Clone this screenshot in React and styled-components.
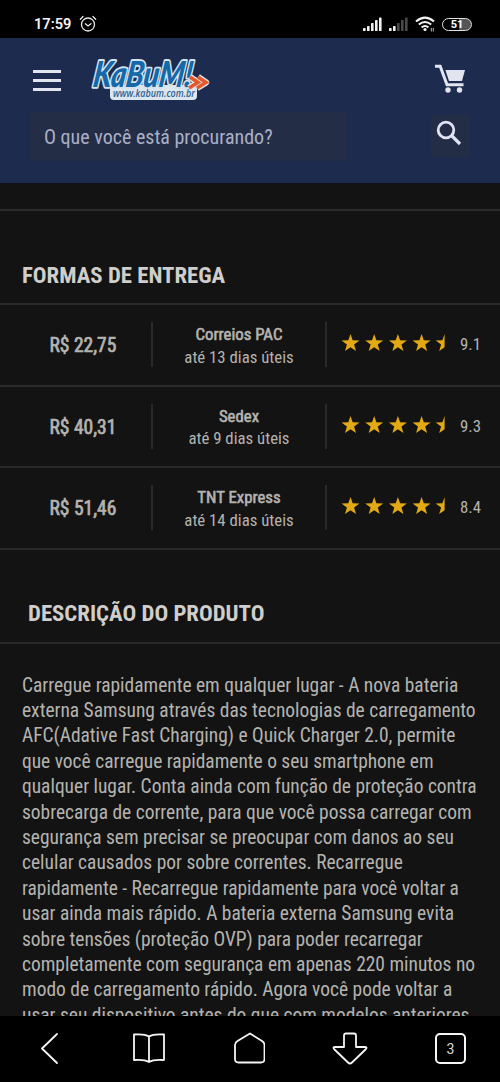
import React from "react";
import styled, { createGlobalStyle } from "styled-components";

const fretes = [
  { preco: "R$ 22,75", nome: "Correios PAC", prazo: "até 13 dias úteis", nota: "9.1" },
  { preco: "R$ 40,31", nome: "Sedex", prazo: "até 9 dias úteis", nota: "9.3" },
  { preco: "R$ 51,46", nome: "TNT Express", prazo: "até 14 dias úteis", nota: "8.4" },
];

const descricao = [
  "Carregue rapidamente em qualquer lugar - A nova bateria",
  "externa Samsung através das tecnologias de carregamento",
  "AFC(Adative Fast Charging) e Quick Charger 2.0, permite",
  "que você carregue rapidamente o seu smartphone em",
  "qualquer lugar. Conta ainda com função de proteção contra",
  "sobrecarga de corrente, para que você possa carregar com",
  "segurança sem precisar se preocupar com danos ao seu",
  "celular causados por sobre correntes. Recarregue",
  "rapidamente - Recarregue rapidamente para você voltar a",
  "usar ainda mais rápido. A bateria externa Samsung evita",
  "sobre tensões (proteção OVP) para poder recarregar",
  "completamente com segurança em apenas 220 minutos no",
  "modo de carregamento rápido. Agora você pode voltar a",
  "usar seu dispositivo antes do que com modelos anteriores",
];

const STAR = "M9.5 0 L11.7 6.2 L18.5 6.4 L13.1 10.5 L15 17 L9.5 13.2 L4 17 L5.9 10.5 L0.5 6.4 L7.3 6.2 Z";

function Signal({ level }) {
  return (
    <svg width="19" height="14" viewBox="0 0 19 14">
      {[3, 5, 8, 11, 13.5].map((h, i) => (
        <rect key={h} x={i * 4} y={14 - h} width="2.6" height={h} rx="0.6" fill={i < level ? "#f2f2f2" : "#4a4a4a"} />
      ))}
    </svg>
  );
}

function Stars() {
  return (
    <svg width="105" height="18" viewBox="0 0 105 18" fill="#e3a914">
      {[0, 1, 2, 3].map((i) => (
        <path key={i} d={STAR} transform={`translate(${i * 23.7} 0)`} />
      ))}
      <path d="M103.6 0 V13.2 L98.2 17 L100.1 10.5 L94.7 6.4 L101.4 6.2 Z" />
    </svg>
  );
}

function Logo() {
  return (
    <LogoSvg width="122" height="50" viewBox="0 0 122 50">
      <rect x="19" y="30" width="87" height="15" rx="4" fill="#dbe6ef" />
      <g transform="translate(1 32) skewX(-8)">
        <text
          fontFamily="Lato, sans-serif"
          fontWeight="900"
          fontStyle="italic"
          fontSize="36"
          textLength="99"
          lengthAdjust="spacingAndGlyphs"
          fill="#1569a8"
          stroke="#d3e4f0"
          strokeWidth="3.6"
          strokeLinejoin="round"
          paintOrder="stroke"
        >
          KaBuM!
        </text>
      </g>
      <g fill="none" stroke="#dfe3ea" strokeWidth="6.4" strokeLinejoin="round">
        <path d="M99 22l8 5.5l-9 5.5M107 22l8 5.5l-9 5.5" />
        <path d="M99 22l8 5.5l-9 5.5M107 22l8 5.5l-9 5.5" stroke="#e4592b" strokeWidth="3.6" strokeLinejoin="miter" />
      </g>
      <text
        x="22"
        y="42"
        fontFamily="Open Sans, sans-serif"
        fontStyle="italic"
        fontWeight="600"
        fontStretch="100%"
        fontSize="10"
        textLength="82"
        lengthAdjust="spacingAndGlyphs"
        fill="#315f91"
      >
        www.kabum.com.br
      </text>
    </LogoSvg>
  );
}

function App() {
  return (
    <Screen>
      <GlobalStyle />
      <StatusBar>
        <Clock>17:59</Clock>
        <svg width="18" height="18" viewBox="0 0 18 18" fill="none" stroke="#e8e8e8" strokeWidth="1.3" strokeLinecap="round">
          <circle cx="9" cy="9.5" r="6.5" />
          <path d="M1.3 4.2L4 1.5M14 1.5l2.7 2.7M6.4 8.8L9 11l3-2.3" />
        </svg>
        <StatusRight>
          <Signal level={5} />
          <Signal level={2} />
          <svg width="20" height="16" viewBox="0 0 20 16" fill="none" stroke="#f2f2f2" strokeWidth="2">
            <path d="M1 5.5Q10 -2.2 19 5.5M3.8 8.6Q10 3.3 16.2 8.6M6.6 11.4Q10 8.6 13.4 11.4" />
            <circle cx="10" cy="13.5" r="1.6" fill="#f2f2f2" stroke="none" />
            <path d="M16.3 12v3.5M18.3 12v3.5" strokeWidth="1" stroke="#bbb" />
          </svg>
          <Battery>51</Battery>
        </StatusRight>
      </StatusBar>

      <Header>
        <HeaderTop>
          <Menu>
            <span />
            <span />
            <span />
          </Menu>
          <Logo />
          <Cart width="32" height="30" viewBox="0 0 32 30">
            <path d="M1 2.3H6.2L13 20.8H29.5" fill="none" stroke="#e2e4f0" strokeWidth="3" />
            <path d="M11.4 6H31L28 17H15Z" fill="#e2e4f0" />
            <circle cx="14" cy="26" r="2.7" fill="#e2e4f0" />
            <circle cx="25.5" cy="26" r="2.7" fill="#e2e4f0" />
          </Cart>
        </HeaderTop>
        <Search>
          <Input>O que você está procurando?</Input>
          <SearchButton>
            <svg width="26" height="26" viewBox="0 0 26 26" fill="none" stroke="#dfe3f2" strokeWidth="2.8">
              <circle cx="10" cy="10" r="7.8" />
              <path d="M15.5 15.5L24 24" strokeWidth="3.2" />
            </svg>
          </SearchButton>
        </Search>
      </Header>

      <Page>
        <Spacer />
        <Title $left={22} $top={49}>FORMAS DE ENTREGA</Title>
        {fretes.map((frete) => (
          <Row key={frete.nome}>
            <Price>{frete.preco}</Price>
            <Service>
              <strong>{frete.nome}</strong>
              <p>{frete.prazo}</p>
            </Service>
            <Rating>
              <Stars />
              <span>{frete.nota}</span>
            </Rating>
          </Row>
        ))}
        <Title $left={28} $top={48}>DESCRIÇÃO DO PRODUTO</Title>
        <Description>
          {descricao.map((linha) => (
            <p key={linha}>{linha}</p>
          ))}
        </Description>
      </Page>

      <NavBar>
        <svg width="32" height="34" viewBox="0 0 32 34">
          <path d="M23 3L8 17.5L23 32" />
        </svg>
        <svg width="32" height="34" viewBox="0 0 32 34">
          <path d="M16 5.5C12 3 7 3 1 3.5V29C7 28.5 12 28.5 16 31C20 28.5 25 28.5 31 29V3.5C25 3 20 3 16 5.5ZM16 5.5V31" />
        </svg>
        <svg width="32" height="34" viewBox="0 0 32 34">
          <path d="M17 2.5L29 10Q31.500 11.5 31.500 14V28Q31.500 31.5 28 31.5H5.500Q2 31.5 2 28V14Q2 11.5 4.500 10Z" />
        </svg>
        <svg width="36" height="34" viewBox="0 0 36 34">
          <path d="M14 2.5H22Q24 2.5 24 4.5V16H32.5Q36 16 33.5 18.5L20 31.5Q18 33.5 16 31.5L2.5 18.5Q0 16 3.5 16H12V4.5Q12 2.5 14 2.5Z" />
        </svg>
        <Tabs>3</Tabs>
      </NavBar>
    </Screen>
  );
}

export default App;

const GlobalStyle = createGlobalStyle`
  * {
    box-sizing: border-box;
  }

  body {
    margin: 0;
    background: #000;
  }

  p {
    margin: 0;
  }

  svg {
    display: block;
    flex: none;
  }
`;

const Screen = styled.div`
  display: flex;
  flex-direction: column;
  width: 500px;
  height: 1082px;
  overflow: hidden;
  background: #131313;
  color: #b5b3b0;
  font-family: "Roboto Condensed", Roboto, sans-serif;
  font-stretch: 75%;
  white-space: nowrap;
`;

const StatusBar = styled.div`
  display: flex;
  flex: none;
  align-items: center;
  height: 38px;
  padding: 10px 28px 0 34px;
  background: #000;
`;

const Clock = styled.span`
  width: 45px;
  font-family: Roboto, sans-serif;
  font-size: 14.6px;
  font-weight: 600;
  font-stretch: 100%;
  color: #f5f5f5;
`;

const StatusRight = styled.div`
  display: flex;
  align-items: center;
  gap: 7px;
  margin-left: auto;
`;

const Battery = styled.div`
  display: flex;
  align-items: center;
  justify-content: center;
  width: 30px;
  height: 13px;
  border: 1.5px solid #e0e0e0;
  border-radius: 7px;
  background: linear-gradient(90deg, #000 58%, #555 58%);
  font-family: Roboto, sans-serif;
  font-size: 11px;
  font-weight: 700;
  font-stretch: 100%;
  color: #fff;
`;

const Header = styled.header`
  flex: none;
  height: 145px;
  padding: 17px 31px 0 33px;
  background: #1c2b4e;
`;

const HeaderTop = styled.div`
  display: flex;
  height: 57px;
`;

const Menu = styled.div`
  display: flex;
  flex-direction: column;
  gap: 6px;
  width: 28px;
  margin: 15px 30px 0 0;

  span {
    height: 3px;
    background: #e2e4f0;
  }
`;

const LogoSvg = styled.svg`
  overflow: visible;
`;

const Cart = styled.svg`
  margin: 9px 3px 0 auto;
`;

const Search = styled.div`
  display: flex;
  justify-content: space-between;
  margin-left: -3px;
`;

const Input = styled.div`
  width: 317px;
  height: 49px;
  padding-left: 14px;
  background: #242d46;
  font-size: 20px;
  line-height: 51px;
  color: #a9b0c6;
`;

const SearchButton = styled.div`
  width: 38px;
  height: 42px;
  margin-top: 3px;
  padding: 5px 0 0 5px;
  background: #242d46;
`;

const Page = styled.main`
  flex: 1;
  min-height: 0;
  overflow: hidden;
`;

const Spacer = styled.div`
  height: 28px;
  border-bottom: 2px solid #2a2a2a;
`;

const Title = styled.h2`
  height: 94px;
  margin: 0;
  padding: ${(props) => props.$top}px 0 0 ${(props) => props.$left}px;
  border-bottom: 2px solid #2a2a2a;
  font-size: 22.8px;
  font-weight: 700;
  line-height: 32px;
  color: #d0cecb;
`;

const Row = styled.div`
  display: flex;
  align-items: center;
  height: 81.5px;
  border-bottom: 2px solid #2a2a2a;
`;

const Price = styled.div`
  width: 153px;
  height: 45px;
  padding-left: 49.5px;
  border-right: 2px solid #2a2a2a;
  font-size: 19.5px;
  line-height: 47px;
  -webkit-text-stroke: 0.7px currentColor;
`;

const Service = styled.div`
  width: 174px;
  height: 45px;
  padding-top: 1px;
  border-right: 2px solid #2a2a2a;
  font-size: 16.8px;
  line-height: 22.5px;
  text-align: center;

  strong {
    font-weight: 400;
    -webkit-text-stroke: 0.6px currentColor;
  }
`;

const Rating = styled.div`
  display: flex;
  align-items: center;
  gap: 14px;
  padding: 0 0 3px 14px;
  font-size: 16.8px;

  span {
    padding-top: 2px;
  }
`;

const Description = styled.div`
  padding: 29px 22px 0;
  font-size: 19.45px;
  line-height: 25.4px;
`;

const NavBar = styled.nav`
  display: flex;
  flex: none;
  align-items: flex-start;
  justify-content: space-between;
  height: 66px;
  padding: 15px 34px 0 34px;
  background: #000;

  svg {
    fill: none;
    stroke: #f5f5f5;
    stroke-width: 1.8;
    stroke-linejoin: round;
    stroke-linecap: round;
  }
`;

const Tabs = styled.div`
  width: 31px;
  height: 31px;
  margin-top: 2px;
  border: 2px solid #f5f5f5;
  border-radius: 5px;
  font-family: Roboto, sans-serif;
  font-size: 14px;
  font-stretch: 100%;
  line-height: 28px;
  text-align: center;
  color: #ddd;
`;
